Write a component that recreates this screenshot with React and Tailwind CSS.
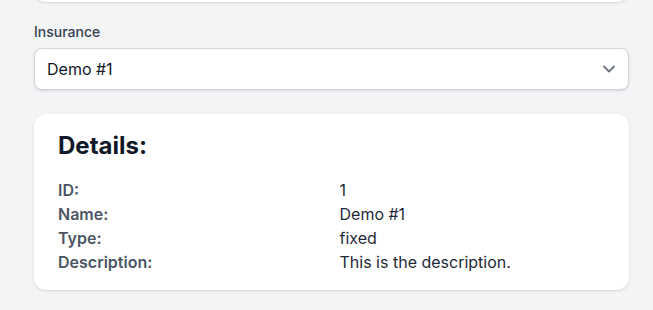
import React, { useState } from 'react';

const details = [
  { label: 'ID:', value: '1' },
  { label: 'Name:', value: 'Demo #1' },
  { label: 'Type:', value: 'fixed' },
  { label: 'Description:', value: 'This is the description.' },
];

const App = () => {
  const [insurance, setInsurance] = useState('Demo #1');

  return (
    <div className="min-h-[310px] bg-[#f3f4f6] pl-[34px] pr-6 font-['Inter',sans-serif] overflow-hidden">
      {/* Card above, scrolled mostly out of view */}
      <div className="-mt-[60px] h-[62px] rounded-xl bg-white shadow"></div>

      {/* Select */}
      <div className="mt-[20px]">
        <label className="block text-sm font-medium leading-5 text-[#374151]">
          Insurance
        </label>
        <div className="relative mt-1.5">
          <select
            value={insurance}
            onChange={(e) => setInsurance(e.target.value)}
            className="block h-[42px] w-full appearance-none rounded-lg border border-[#d1d5db] bg-white pl-3 pr-10 text-base text-[#111827] shadow-sm outline-none"
          >
            <option>Demo #1</option>
            <option>Demo #2</option>
          </select>
          <svg
            className="pointer-events-none absolute right-[10px] top-1/2 h-5 w-5 -translate-y-1/2 text-[#6b7280]"
            viewBox="0 0 20 20"
            fill="none"
            stroke="currentColor"
            strokeWidth="1.8"
            strokeLinecap="round"
            strokeLinejoin="round"
          >
            <path d="M5 7.5l5 5 5-5" />
          </svg>
        </div>
      </div>

      {/* Details */}
      <div className="mt-6 rounded-xl bg-white px-6 pt-4 pb-4 shadow">
        <h2 className="text-2xl font-bold text-[#111827]">Details:</h2>
        <div className="mt-4 grid grid-cols-2 gap-x-4">
          {details.map((row) => (
            <React.Fragment key={row.label}>
              <div className="text-base leading-6 font-semibold text-[#4b5563]">{row.label}</div>
              <div className="text-base leading-6 text-[#1f2937]">{row.value}</div>
            </React.Fragment>
          ))}
        </div>
      </div>
    </div>
  );
};

export default App;
